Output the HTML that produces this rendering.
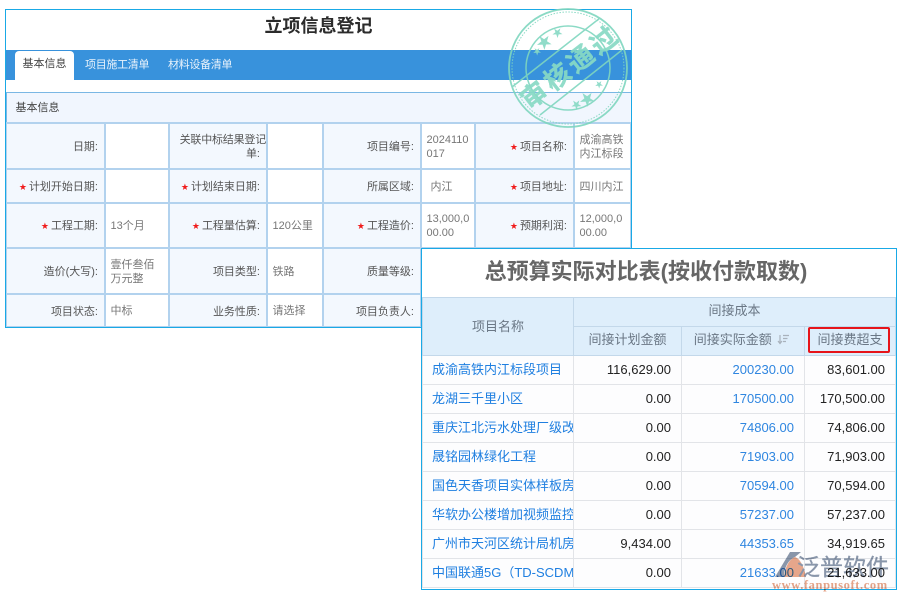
<!DOCTYPE html>
<html lang="zh">
<head>
<meta charset="utf-8">
<style>
html,body{margin:0;padding:0;background:#fff}
body{width:900px;height:600px;position:relative;overflow:hidden;font-family:"Liberation Sans","Noto Sans CJK SC",sans-serif}
*{box-sizing:border-box}
#wrap{position:absolute;left:0;top:0;width:900px;height:600px;filter:blur(.3px)}
.abs{position:absolute}
#left{left:5px;top:9px;width:627px;height:319px;border:1px solid #19a9e6;background:transparent}
#t1{position:absolute;left:5px;top:10px;width:627px;text-align:center;font-size:18px;font-weight:700;color:#2b2b2b;line-height:32px}
#bar{left:6px;top:50px;width:625px;height:30px;background:#3892dc}
#tab{left:15px;top:51px;width:59px;height:29px;background:#fff;border-radius:4px 4px 0 0;font-size:11px;line-height:27px;text-align:center;color:#444}
.tb{top:51px;font-size:11px;line-height:28px;color:#e8f2fb;letter-spacing:-.3px}
table{border-collapse:collapse;table-layout:fixed;position:absolute}
#lt{left:5px;top:92px;width:625px;font-size:11px;line-height:14px}
#lt td{border:2px solid #b2d2ee;padding:2px 4.5px 0;vertical-align:middle;color:#777;background:#fff}
#lt td.l{background:#f3f8fe;color:#555;text-align:right;padding:3px 6px 0 3px}
#lt td.h{background:#f1f6fe;color:#444;text-align:left;padding:2px 0 0 9px;border-width:1px;border-color:#7ab7e4;border-bottom:2px solid #b2d2ee}
#lt td.v{word-break:break-all}
#lt span{display:block;white-space:nowrap;margin-right:-6px;letter-spacing:-.2px}
i{font-style:normal;color:#f01c1c;margin-right:2px;font-size:9px;vertical-align:0;font-family:"DejaVu Sans",sans-serif}
#right{left:421px;top:248px;width:476px;height:342px;border:1px solid #19a9e6;background:#fff}
#t2{position:absolute;left:421px;top:256px;width:450px;text-align:center;font-size:22px;font-weight:700;color:#666;line-height:32px}
#rt{left:422px;top:297px;width:473px;font-size:13px;line-height:16px}
#rt td{border:1px solid #e2e4e8;height:29px;padding:0 10px 1px;white-space:nowrap;overflow:hidden;text-align:right;color:#222;background:#fdfdfe}
#rt th{background:#deeefb;font-weight:400;color:#6a7785;border:1px solid #c3d8ea;height:29px;padding:0 0 2px;font-size:13px}
#rt td.n{text-align:left;color:#1f7fe0;padding-right:0;padding-left:9px}
#rt td.b{color:#2f86e0}
#box{left:808px;top:327px;width:82px;height:26px;border:2.5px solid #e6141a;border-radius:2px}
#stamp{left:500px;top:4px}
#logo{left:770px;top:545px;width:125px;height:47px;mix-blend-mode:multiply}
</style>
</head>
<body>
<div id="wrap">
<div id="t1">立项信息登记</div>
<div class="abs" id="bar"></div>
<div class="abs" id="tab">基本信息</div>
<div class="abs tb" style="left:85px">项目施工清单</div>
<div class="abs tb" style="left:168px">材料设备清单</div>

<table id="lt">
<colgroup><col style="width:99px"><col style="width:64px"><col style="width:98px"><col style="width:56px"><col style="width:98px"><col style="width:54px"><col style="width:99px"><col style="width:57px"></colgroup>
<tr style="height:30px"><td class="h" colspan="8">基本信息</td></tr>
<tr style="height:46px"><td class="l">日期:</td><td></td><td class="l"><span>关联中标结果登记</span>单:</td><td></td><td class="l">项目编号:</td><td class="v">2024110017</td><td class="l"><i>★</i>项目名称:</td><td class="v">成渝高铁内江标段</td></tr>
<tr style="height:34px"><td class="l"><i>★</i>计划开始日期:</td><td></td><td class="l"><i>★</i>计划结束日期:</td><td></td><td class="l">所属区域:</td><td class="v" style="padding-left:8.5px">内江</td><td class="l"><i>★</i>项目地址:</td><td class="v">四川内江</td></tr>
<tr style="height:45px"><td class="l"><i>★</i>工程工期:</td><td class="v">13个月</td><td class="l"><i>★</i>工程量估算:</td><td class="v">120公里</td><td class="l"><i>★</i>工程造价:</td><td class="v">13,000,000.00</td><td class="l"><i>★</i>预期利润:</td><td class="v">12,000,000.00</td></tr>
<tr style="height:46px"><td class="l">造价(大写):</td><td class="v">壹仟叁佰万元整</td><td class="l">项目类型:</td><td class="v">铁路</td><td class="l">质量等级:</td><td></td><td class="l"></td><td></td></tr>
<tr style="height:33px"><td class="l">项目状态:</td><td class="v">中标</td><td class="l">业务性质:</td><td class="v">请选择</td><td class="l">项目负责人:</td><td></td><td class="l"></td><td></td></tr>
</table>
<div class="abs" id="left"></div>

<svg class="abs" id="stamp" width="136" height="130" viewBox="500 4 136 130">
<g fill="none" stroke="#7fd6bf" opacity=".9">
<circle cx="568" cy="68" r="59" stroke-width="1.8"/>
<circle cx="568" cy="68" r="56" stroke-width="1" stroke-dasharray="1.5 1.5"/>
<circle cx="568" cy="68" r="42" stroke-width="1.5"/>
<line x1="512" y1="87" x2="600" y2="18" stroke-width="1.5"/>
<line x1="540" y1="115" x2="622" y2="50" stroke-width="1.5"/>
</g>
<g fill="#88dac5" opacity=".92" font-family="'Liberation Sans','Noto Sans CJK SC',sans-serif">
<text font-size="26" font-weight="700" stroke="#88dac5" stroke-width=".4" text-anchor="middle" letter-spacing="3.5" transform="translate(576 74) rotate(-38)">审核通过</text>
<text font-size="19" font-family="'DejaVu Sans',sans-serif" text-anchor="middle" transform="translate(548 47) rotate(-38)">★</text>
<text font-size="13" font-family="'DejaVu Sans',sans-serif" text-anchor="middle" transform="translate(560 36) rotate(-38)">★</text>
<text font-size="10" font-family="'DejaVu Sans',sans-serif" text-anchor="middle" transform="translate(539 54) rotate(-38)">★</text>
<text font-size="19" font-family="'DejaVu Sans',sans-serif" text-anchor="middle" transform="translate(591 104) rotate(-38)">★</text>
<text font-size="13" font-family="'DejaVu Sans',sans-serif" text-anchor="middle" transform="translate(579 108) rotate(-38)">★</text>
<text font-size="10" font-family="'DejaVu Sans',sans-serif" text-anchor="middle" transform="translate(601 87) rotate(-38)">★</text>
</g>
</svg>

<div class="abs" id="right"></div>
<div id="t2">总预算实际对比表(按收付款取数)</div>
<table id="rt">
<colgroup><col style="width:151px"><col style="width:108px"><col style="width:123px"><col style="width:91px"></colgroup>
<tr><th rowspan="2" style="padding-bottom:0">项目名称</th><th colspan="3">间接成本</th></tr>
<tr><th>间接计划金额</th><th style="padding-right:2px">间接实际金额 <svg width="13" height="11" viewBox="0 0 13 11" style="vertical-align:-1px;margin-left:2px"><path d="M3 1v8M1 7l2 2.5L5 7M6 1.5h6M6 4.5h4.5M6 7.5h3" fill="none" stroke="#a9b2bc" stroke-width="1.2"/></svg></th><th>间接费超支</th></tr>
<tr><td class="n">成渝高铁内江标段项目</td><td>116,629.00</td><td class="b">200230.00</td><td>83,601.00</td></tr>
<tr><td class="n">龙湖三千里小区</td><td>0.00</td><td class="b">170500.00</td><td>170,500.00</td></tr>
<tr><td class="n">重庆江北污水处理厂级改造</td><td>0.00</td><td class="b">74806.00</td><td>74,806.00</td></tr>
<tr><td class="n">晟铭园林绿化工程</td><td>0.00</td><td class="b">71903.00</td><td>71,903.00</td></tr>
<tr><td class="n">国色天香项目实体样板房</td><td>0.00</td><td class="b">70594.00</td><td>70,594.00</td></tr>
<tr><td class="n">华软办公楼增加视频监控</td><td>0.00</td><td class="b">57237.00</td><td>57,237.00</td></tr>
<tr><td class="n">广州市天河区统计局机房</td><td>9,434.00</td><td class="b">44353.65</td><td>34,919.65</td></tr>
<tr><td class="n">中国联通5G（TD-SCDMA）</td><td>0.00</td><td class="b">21633.00</td><td>21,633.00</td></tr>
</table>
<div class="abs" id="box"></div>

<svg class="abs" id="logo" width="125" height="47" viewBox="770 545 125 47">
<path d="M775 577 L790 552 L801 552 L795 557 C788 560 784 568 784 577Z" fill="#8a97ab"/>
<path d="M784 577 C785 566 790 559 795 557 C801 559 804 568 806 577Z" fill="#e8a78c"/>
<text x="797" y="575" font-family="'Noto Sans CJK SC',sans-serif" font-size="23" fill="#8a97ab" stroke="#8a97ab" stroke-width=".3">泛普软件</text>
<text x="772" y="589" font-family="'Liberation Serif',serif" font-size="12.5" font-weight="700" fill="#e5a489" letter-spacing=".6">www.fanpusoft.com</text>
</svg>
</div>
</body>
</html>
